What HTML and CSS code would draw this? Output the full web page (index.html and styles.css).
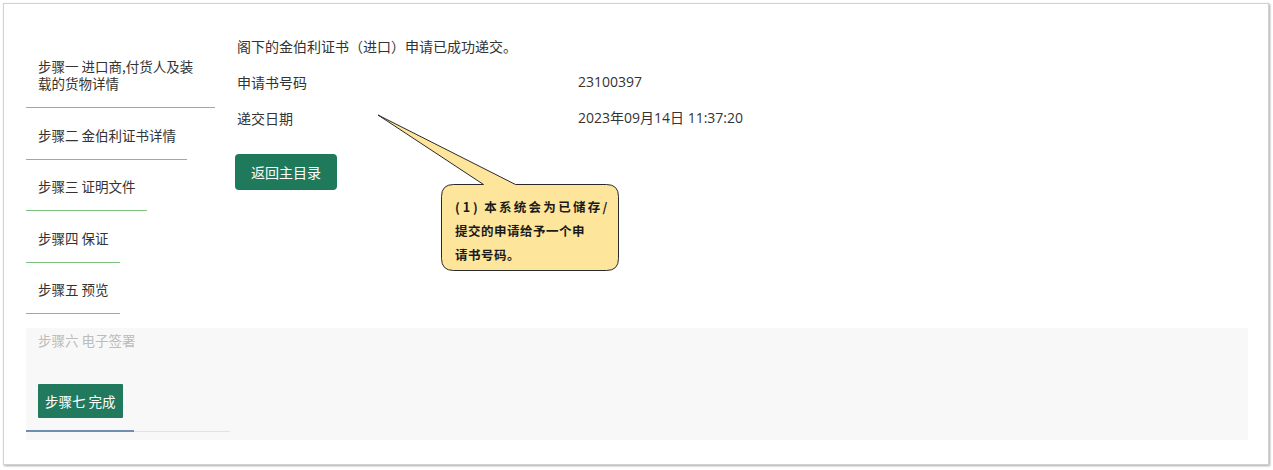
FILE: index.html
```html
<!DOCTYPE html>
<html lang="zh-CN">
<head>
  <meta charset="UTF-8" />
  <title>金伯利证书（进口）申请</title>
  <link rel="stylesheet" href="styles.css">
</head>
<body>
  <div class="frame">
    <div class="layout">
      <ul class="steps">
        <li class="step step-wide">步骤一 进口商,付货人及装载的货物详情</li>
        <li class="step">步骤二 金伯利证书详情</li>
        <li class="step">步骤三 证明文件</li>
        <li class="step">步骤四 保证</li>
        <li class="step">步骤五 预览</li>
      </ul>

      <main class="result">
        <p class="row">阁下的金伯利证书（进口）申请已成功递交。</p>
        <div class="row">
          <span class="label">申请书号码</span>
          <span class="value">23100397</span>
        </div>
        <div class="row">
          <span class="label">递交日期</span>
          <span class="value">2023年09月14日 11:37:20</span>
        </div>
        <button type="button" class="btn-back">返回主目录</button>
      </main>
    </div>

    <div class="pending">
      <div class="step-disabled">步骤六 电子签署</div>
      <div class="current-track">
        <span class="current"><span class="current-btn">步骤七 完成</span></span>
      </div>
    </div>

    <!-- annotation bubble -->
    <div class="callout">
      <svg width="256" height="166" viewBox="0 0 256 166">
        <path d="M83.5 74.5 L113.5 74.5 L8 5 L145.5 74.5 L236.5 74.5 Q248.5 74.5 248.5 86.5 L248.5 148.5 Q248.5 160.5 236.5 160.5 L83.5 160.5 Q71.5 160.5 71.5 148.5 L71.5 86.5 Q71.5 74.5 83.5 74.5 Z"
              fill="#fee59c" stroke="#2a2a2a" stroke-width="1" stroke-linejoin="round"/>
      </svg>
      <div class="callout-text"><span class="num">(1)</span> <span class="wide">本系统会为已储存/</span><br>提交的申请给予一个申<br>请书号码。</div>
    </div>
  </div>
</body>
</html>
```

FILE: styles.css
```css
body {
  margin: 0;
  padding: 0;
  background: #ffffff;
  font-family: "Open Sans", "Noto Sans CJK SC", sans-serif;
  color: #333333;
}

.frame {
  position: relative;
  margin: 3px;
  width: 1222px;
  height: 391px;
  padding: 33px 20px 36px 22px;
  border: 1px solid #d2d2d2;
  box-shadow: 1px 1px 2px rgba(0, 0, 0, 0.35);
}

.layout {
  display: flex;
  gap: 7px;
}

/* left step menu */
.steps {
  list-style: none;
  margin: 0;
  padding: 3px 0 0;
  width: 204px;
  font-family: "Noto Sans CJK SC", sans-serif;
  font-size: 13.5px;
  line-height: 17px;
}

.step {
  display: block;
  width: fit-content;
  padding: 18.5px 11px 15px 12px;
  border-bottom: 1px solid #7cc37e;
}

.step-wide {
  width: 166px;
  padding-top: 18px;
}

/* main result area */
.result {
  flex: 1;
  font-family: "Noto Sans CJK SC", sans-serif;
  font-size: 14px;
  line-height: 20px;
  margin-top: -1px;
}

.row {
  display: flex;
  margin: 0 0 16px;
}

.label {
  width: 341px;
}

.value {
  font-family: "Open Sans", "Noto Sans CJK SC", sans-serif;
}

.btn-back {
  margin-top: 10px;
  margin-left: -2px;
  height: 36px;
  padding: 0 16px;
  border: none;
  border-radius: 4px;
  background-color: #1f7a5c;
  color: #ffffff;
  font-family: "Noto Sans CJK SC", sans-serif;
  font-size: 14px;
  cursor: pointer;
}

/* grey block with remaining steps */
.pending {
  margin-top: 14px;
  padding: 4px 0 8px;
  background-color: #f8f8f8;
  font-family: "Noto Sans CJK SC", sans-serif;
  font-size: 13.5px;
  line-height: 17px;
}

.step-disabled {
  padding-left: 12px;
  color: #bcbcbc;
}

.current-track {
  width: 204px;
  margin-top: 35px;
  border-bottom: 1px solid #e2e2e2;
}

.current {
  display: inline-block;
  padding: 0 11px 12px 12px;
  margin-bottom: -1px;
  border-bottom: 2px solid #6e8fb0;
}

.current-btn {
  display: inline-block;
  height: 34px;
  line-height: 34px;
  padding: 0 7px;
  background-color: #217a5d;
  color: #ffffff;
  border-radius: 1px;
}

/* annotation */
.callout {
  position: absolute;
  left: 366px;
  top: 106px;
  width: 256px;
  height: 166px;
}

.callout svg {
  display: block;
}

.callout-text {
  position: absolute;
  left: 85px;
  top: 85px;
  width: 175px;
  font-family: "Noto Sans CJK SC", sans-serif;
  font-size: 12.5px;
  font-weight: bold;
  line-height: 24px;
  letter-spacing: 0.5px;
  color: #1a1a1a;
}

.callout-text .num {
  letter-spacing: 3px;
}

.callout-text .wide {
  letter-spacing: 2.3px;
}
```
